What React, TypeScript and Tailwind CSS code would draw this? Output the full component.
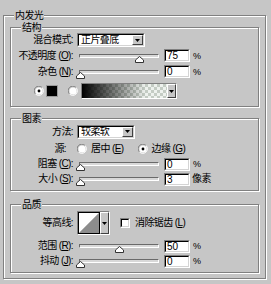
import React from "react";

const font = { fontFamily: '"Liberation Sans", "Noto Sans CJK SC", sans-serif' };

function Group({ title, className, children }: { title: string; className?: string; children?: React.ReactNode }) {
  return (
    <div className={`relative border border-[#808080] shadow-[inset_1px_1px_0_#fff,1px_1px_0_#fff] ${className ?? ""}`}>
      <span className="absolute left-[10px] top-[-6px] bg-[#c6c6c6] px-[1px] text-[10px] leading-[11px] tracking-[-0.6px] text-black">{title}</span>
      {children}
    </div>
  );
}

function Label({ children, w = "w-[62px]" }: { children: React.ReactNode; w?: string }) {
  return <div className={`${w} shrink-0 text-right text-[10px] leading-[12px] tracking-[-0.6px] text-black whitespace-nowrap`}>{children}</div>;
}

function Thumb() {
  return (
    <svg width="9" height="7" viewBox="0 0 9 7" className="block">
      <polygon points="4.5,0.5 8.5,4 8.5,6.5 0.5,6.5 0.5,4" fill="#fff" stroke="#333" strokeWidth="1" />
    </svg>
  );
}

function Slider({ pct }: { pct: number }) {
  return (
    <div className="relative ml-[2px] h-[12px] w-[80px] shrink-0">
      <div className="absolute left-0 right-0 top-[4px] h-[4px] border border-t-[#6a6a6a] border-l-[#6a6a6a] border-b-white border-r-white bg-[#d8d8d8]" />
      <div className="absolute top-[6px]" style={{ left: pct * 78 - 3 }}>
        <Thumb />
      </div>
    </div>
  );
}

function Input({ value }: { value: string }) {
  return (
    <div className="ml-[5px] h-[13px] w-[26px] shrink-0 border border-t-[#808080] border-l-[#808080] border-b-white border-r-white bg-white">
      <div className="h-full border border-t-black border-l-black border-b-[#d4d4d4] border-r-[#d4d4d4] pl-[1px] text-[10px] leading-[10px] text-black">
        {value}
      </div>
    </div>
  );
}

function Arrow({ className }: { className?: string }) {
  return (
    <div className={`flex items-center justify-center border border-t-white border-l-white border-b-[#404040] border-r-[#404040] bg-[#c6c6c6] ${className ?? ""}`}>
      <svg width="5" height="3" viewBox="0 0 5 3">
        <polygon points="0,0 5,0 2.5,3" fill="#000" />
      </svg>
    </div>
  );
}

function Dropdown({ value, w }: { value: string; w: string }) {
  return (
    <div className={`flex h-[14px] ${w} shrink-0 border border-t-[#808080] border-l-[#808080] border-b-white border-r-white`}>
      <div className="flex flex-1 border border-t-black border-l-black border-b-[#d4d4d4] border-r-[#d4d4d4] bg-white">
        <div className="flex-1 pl-[2px] text-[10px] leading-[10px] tracking-[-0.6px] text-black">{value}</div>
        <Arrow className="w-[11px]" />
      </div>
    </div>
  );
}

function Radio({ checked }: { checked?: boolean }) {
  return (
    <svg width="10" height="10" viewBox="0 0 10 10" className="block shrink-0">
      <path d="M1.5 8 A4.5 4.5 0 0 1 8 1.5" stroke="#808080" fill="none" />
      <path d="M8 1.5 A4.5 4.5 0 0 1 1.5 8" stroke="#fff" fill="none" />
      <circle cx="5" cy="5" r="3.6" fill="#fff" />
      {checked && <circle cx="5" cy="5" r="1.4" fill="#000" />}
    </svg>
  );
}

function Pct() {
  return <span className="ml-[3px] text-[9px] leading-[10px]">%</span>;
}

export default function App() {
  return (
    <div className="h-[284px] w-[271px] overflow-hidden bg-[#c6c6c6] pl-[3px] pt-[15px]" style={font}>
      <Group title="内发光" className="h-[264px] w-[263px] px-[6px] pt-[11px]">
        {/* 结构 */}
        <Group title="结构" className="h-[80px]">
          <div className="flex flex-col">
            <div className="mt-[5px] flex h-[14px] items-center">
              <Label>混合模式:</Label>
              <div className="ml-[4px]">
                <Dropdown value="正片叠底" w="w-[68px]" />
              </div>
            </div>
            <div className="mt-[2px] flex h-[13px] items-center">
              <Label>
                不透明度 (<u>O</u>):
              </Label>
              <div className="ml-[4px] flex items-center">
                <Slider pct={0.75} />
                <Input value="75" />
                <Pct />
              </div>
            </div>
            <div className="mt-[3px] flex h-[13px] items-center">
              <Label>
                杂色 (<u>N</u>):
              </Label>
              <div className="ml-[4px] flex items-center">
                <Slider pct={0} />
                <Input value="0" />
                <Pct />
              </div>
            </div>
            <div className="mt-[5px] flex h-[16px] items-center pl-[23px]">
              <Radio checked />
              <div className="ml-[2px] h-[12px] w-[12px] border border-[#9a9a9a] bg-black" />
              <div className="ml-[10px]">
                <Radio />
              </div>
              <div className="ml-[3px] flex h-[16px] w-[96px] border border-t-[#808080] border-l-[#808080] border-b-white border-r-white">
                <div className="relative flex-1 bg-[repeating-conic-gradient(#c4ccc4_0_25%,#eef2ee_0_50%)] bg-size-[6px_6px]">
                  <div className="absolute inset-0 bg-[linear-gradient(to_right,#000_0%,rgba(0,0,0,0.6)_30%,rgba(0,0,0,0)_75%)]" />
                </div>
                <Arrow className="w-[9px]" />
              </div>
            </div>
          </div>
        </Group>

        {/* 图素 */}
        <Group title="图素" className="mt-[11px] h-[73px]">
          <div className="flex flex-col">
            <div className="mt-[6px] flex h-[13px] items-center">
              <Label>方法:</Label>
              <div className="ml-[4px]">
                <Dropdown value="较柔软" w="w-[58px]" />
              </div>
            </div>
            <div className="mt-[5px] flex h-[12px] items-center">
              <Label w="w-[55px]">源:</Label>
              <div className="ml-[11px] flex items-center">
                <Radio />
                <span className="ml-[4px] text-[10px] leading-[12px] tracking-[-0.6px]">
                  居中 (<u>E</u>)
                </span>
                <div className="ml-[14px]">
                  <Radio checked />
                </div>
                <span className="ml-[4px] text-[10px] leading-[12px] tracking-[-0.6px]">
                  边缘 (<u>G</u>)
                </span>
              </div>
            </div>
            <div className="mt-[3px] flex h-[12px] items-center">
              <Label>
                阻塞 (<u>C</u>):
              </Label>
              <div className="ml-[4px] flex items-center">
                <Slider pct={0} />
                <Input value="0" />
                <Pct />
              </div>
            </div>
            <div className="mt-[3px] flex h-[12px] items-center">
              <Label>
                大小 (<u>S</u>):
              </Label>
              <div className="ml-[4px] flex items-center">
                <Slider pct={0} />
                <Input value="3" />
                <span className="ml-[2px] text-[10px] leading-[12px] tracking-[-0.6px]">像素</span>
              </div>
            </div>
          </div>
        </Group>

        {/* 品质 */}
        <Group title="品质" className="mt-[13px] h-[69px]">
          <div className="flex flex-col">
            <div className="mt-[6px] flex h-[24px] items-center">
              <Label>等高线:</Label>
              <div className="ml-[4px] flex h-[24px] w-[33px] border border-t-[#808080] border-l-[#808080] border-b-white border-r-white">
                <div className="flex flex-1 border border-black">
                  <svg width="100%" height="100%" viewBox="0 0 20 20" preserveAspectRatio="none" className="block">
                    <polygon points="0,0 20,0 0,20" fill="#fff" />
                    <polygon points="20,0 20,20 0,20" fill="#8c8c8c" />
                  </svg>
                </div>
                <Arrow className="w-[9px]" />
              </div>
              <div className="ml-[10px] h-[10px] w-[10px] border border-t-[#808080] border-l-[#808080] border-b-white border-r-white bg-white">
                <div className="h-full border border-t-black border-l-black border-b-[#d4d4d4] border-r-[#d4d4d4]" />
              </div>
              <span className="ml-[5px] text-[10px] leading-[12px] tracking-[-0.6px]">
                消除锯齿 (<u>L</u>)
              </span>
            </div>
            <div className="mt-[5px] flex h-[12px] items-center">
              <Label>
                范围 (<u>R</u>):
              </Label>
              <div className="ml-[4px] flex items-center">
                <Slider pct={0.5} />
                <Input value="50" />
                <Pct />
              </div>
            </div>
            <div className="mt-[3px] flex h-[12px] items-center">
              <Label>
                抖动 (<u>J</u>):
              </Label>
              <div className="ml-[4px] flex items-center">
                <Slider pct={0} />
                <Input value="0" />
                <Pct />
              </div>
            </div>
          </div>
        </Group>
      </Group>
    </div>
  );
}
